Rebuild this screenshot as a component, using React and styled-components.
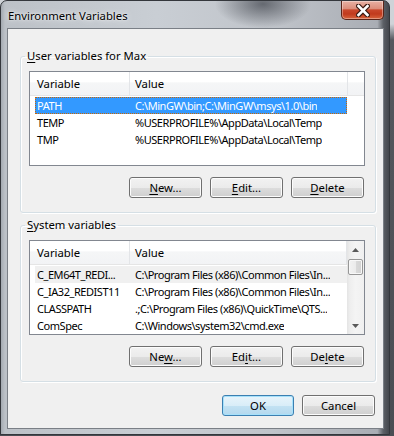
import React from "react";
import styled, { createGlobalStyle, css } from "styled-components";

const FONT = `"Segoe UI", "Noto Sans", sans-serif`;

const GlobalStyle = createGlobalStyle`
  html, body { margin: 0; padding: 0; }
  body {
    width: 394px;
    height: 436px;
    overflow: hidden;
    background: linear-gradient(180deg, #cfd3d8 0, #cfd3d8 24px, #55585e 40px, #4a4d53 100%);
    font-family: ${FONT};
    font-size: 11.3px;
    color: #000;
  }
`;

const Window = styled.div`
  box-sizing: border-box;
  width: 390px;
  height: 435px;
  display: flex;
  flex-direction: column;
  border: 1px solid #34373c;
  border-radius: 7px 7px 0 0;
  overflow: hidden;
  background:
    radial-gradient(ellipse 48px 24px at 262px 3px, rgba(70, 74, 82, 0.75), rgba(70, 74, 82, 0)),
    linear-gradient(90deg, #a4aab1 0, #bcc1c7 4px, #c9ced4 40%, #c0c4ca 70%, #a9adb4 97%, #5c6066 98.5%, #44474d 100%);
`;

const TitleBar = styled.div`
  height: 27px;
  display: flex;
  align-items: flex-start;
  flex-shrink: 0;
`;

const Title = styled.div`
  padding-left: 7px;
  line-height: 29px;
  color: #000;
  text-shadow: 0 0 6px rgba(255, 255, 255, 0.95), 0 0 2px rgba(255, 255, 255, 0.8);
`;

const CloseButton = styled.div`
  box-sizing: border-box;
  margin-left: auto;
  margin-right: 5px;
  width: 43px;
  height: 19px;
  border: 1px solid #5b2418;
  border-top: 0;
  border-radius: 0 0 5px 5px;
  background: linear-gradient(180deg, #e8b1a4 0%, #dc8e7b 42%, #c9472b 50%, #c13a1d 72%, #d8643d 100%);
  box-shadow: inset 0 0 0 1px rgba(255, 255, 255, 0.35);
  display: flex;
  align-items: center;
  justify-content: center;
`;

const Client = styled.div`
  flex: 1;
  margin: 0 5px 5px 6px;
  border: 1px solid #7a7f86;
  background: #f0f0f0;
  padding: 20px 7px 12px 12px;
  display: flex;
  flex-direction: column;
`;

const Group = styled.fieldset`
  margin: ${(p) => (p.$second ? "5px 0 0 0" : "0")};
  padding: 0;
  min-width: 0;
  border: 1px solid #d5dfe5;
  border-radius: 3px;
  box-shadow: inset 1px 1px 0 #ffffff, 1px 1px 0 #ffffff;
`;

const Legend = styled.legend`
  margin-left: 4px;
  padding: 0 2px;
  line-height: 14px;
`;

const GroupBody = styled.div`
  padding: 8px 10px 14px 8px;
  display: flex;
  flex-direction: column;
`;

const ListBox = styled.div`
  box-sizing: border-box;
  height: 95px;
  border: 1px solid #828790;
  background: #fff;
  display: flex;
  overflow: hidden;
  font-size: 11px;
`;

const ListMain = styled.div`
  flex: 1;
  display: flex;
  flex-direction: column;
  min-width: 0;
`;

const Header = styled.div`
  height: 23px;
  display: flex;
  border-bottom: 1px solid #e5e5e5;
  background: linear-gradient(180deg, #ffffff 0%, #ffffff 45%, #f5f6f7 46%, #f2f3f5 100%);
  flex-shrink: 0;
`;

const HeaderCell = styled.div`
  box-sizing: border-box;
  width: ${(p) => (p.$w ? `${p.$w}px` : "auto")};
  flex: ${(p) => (p.$w ? "none" : "1")};
  padding-left: ${(p) => p.$pl || 0}px;
  border-right: ${(p) => (p.$w ? "1px solid #e3e5e8" : "0")};
  display: flex;
  align-items: center;
  color: #000;
  font-size: 11.3px;
`;

const Rows = styled.div`
  padding-top: 1px;
  display: flex;
  flex-direction: column;
`;

const Row = styled.div`
  box-sizing: border-box;
  margin-left: 5px;
  width: 312px;
  height: 17px;
  display: flex;
  align-items: center;
  white-space: nowrap;
  letter-spacing: -0.45px;
  ${(p) =>
    p.$selected &&
    css`
      background: #3399ff;
      color: #fff;
      outline: 1px dotted #cc6600;
      outline-offset: -1px;
    `}
  ${(p) =>
    p.$inactive &&
    css`
      background: #f0f0f0;
    `}
`;

const NameCell = styled.div`
  box-sizing: border-box;
  width: 94px;
  padding-left: 2px;
  overflow: hidden;
`;

const ValueCell = styled.div`
  padding-left: 6px;
  overflow: hidden;
`;

const ScrollBar = styled.div`
  width: 17px;
  flex-shrink: 0;
  display: flex;
  flex-direction: column;
  background: linear-gradient(90deg, #e4e4e4 0, #eeeeee 3px, #f4f4f4 50%, #f0f0f0 100%);
`;

const ArrowBtn = styled.div`
  height: 17px;
  display: flex;
  align-items: center;
  justify-content: center;
  flex-shrink: 0;
`;

const Thumb = styled.div`
  box-sizing: border-box;
  margin: 1px 1px 0 1px;
  height: 16px;
  border: 1px solid #979797;
  border-radius: 2px;
  background: linear-gradient(90deg, #f2f2f2 0%, #ebebeb 50%, #d9d9d9 51%, #d2d2d2 100%);
  box-shadow: inset 0 0 0 1px #f8f8f8;
`;

const Track = styled.div`
  flex: 1;
`;

const ButtonRow = styled.div`
  display: flex;
  justify-content: flex-end;
  gap: 8px;
  margin: ${(p) => p.$m || "11px 1px 0 0"};
`;

const Button = styled.button`
  box-sizing: border-box;
  width: ${(p) => p.$w || 73}px;
  height: 21px;
  padding: 0;
  margin: 0;
  font-family: ${FONT};
  font-size: 11.3px;
  color: #000;
  border: 1px solid #707070;
  border-radius: 3px;
  background: linear-gradient(180deg, #f2f2f2 0%, #ebebeb 50%, #dddddd 51%, #cfcfcf 100%);
  box-shadow: inset 0 0 0 1px #fcfcfc;
  ${(p) =>
    p.$default &&
    css`
      border-color: #3c7fb1;
      background: linear-gradient(180deg, #e8f4fb 0%, #d9edf8 50%, #c3e2f3 51%, #b3d8ee 100%);
      box-shadow: inset 0 0 0 1px #a6e1fb;
    `}
`;

const Mn = styled.span`
  text-decoration: underline;
  text-underline-offset: 2px;
`;

const Arrow = ({ up }) => (
  <svg width="7" height="4" viewBox="0 0 7 4">
    <path d={up ? "M3.5 0 L7 4 L0 4 Z" : "M0 0 L7 0 L3.5 4 Z"} fill="#5a5a5a" />
  </svg>
);

const CloseGlyph = () => (
  <svg width="14" height="13" viewBox="0 0 14 13">
    <path d="M2.5 2 L11.5 11 M11.5 2 L2.5 11" stroke="#3a1a12" strokeWidth="5" strokeLinecap="square" />
    <path d="M2.5 2 L11.5 11 M11.5 2 L2.5 11" stroke="#ffffff" strokeWidth="2.6" strokeLinecap="square" />
  </svg>
);

const userVars = [
  ["PATH", "C:\\MinGW\\bin;C:\\MinGW\\msys\\1.0\\bin"],
  ["TEMP", "%USERPROFILE%\\AppData\\Local\\Temp"],
  ["TMP", "%USERPROFILE%\\AppData\\Local\\Temp"],
];

const sysVars = [
  ["C_EM64T_REDI...", "C:\\Program Files (x86)\\Common Files\\In..."],
  ["C_IA32_REDIST11", "C:\\Program Files (x86)\\Common Files\\In..."],
  ["CLASSPATH", ".;C:\\Program Files (x86)\\QuickTime\\QTS..."],
  ["ComSpec", "C:\\Windows\\system32\\cmd.exe"],
];

function ButtonSet({ letters }) {
  const [a, b, c] = letters;
  return (
    <ButtonRow>
      <Button>{a}</Button>
      <Button>{b}</Button>
      <Button>{c}</Button>
    </ButtonRow>
  );
}

export default function App() {
  return (
    <>
      <GlobalStyle />
      <Window>
        <TitleBar>
          <Title>Environment Variables</Title>
          <CloseButton>
            <CloseGlyph />
          </CloseButton>
        </TitleBar>
        <Client>
          <Group>
            <Legend>
              <Mn>U</Mn>ser variables for Max
            </Legend>
            <GroupBody>
              <ListBox>
                <ListMain>
                  <Header>
                    <HeaderCell $w={100} $pl={7}>Variable</HeaderCell>
                    <HeaderCell $w={218} $pl={5}>Value</HeaderCell>
                    <HeaderCell />
                  </Header>
                  <Rows>
                    {userVars.map(([n, v], i) => (
                      <Row key={n} $selected={i === 0}>
                        <NameCell>{n}</NameCell>
                        <ValueCell>{v}</ValueCell>
                      </Row>
                    ))}
                  </Rows>
                </ListMain>
              </ListBox>
              <ButtonSet
                letters={[
                  <><Mn>N</Mn>ew...</>,
                  <><Mn>E</Mn>dit...</>,
                  <><Mn>D</Mn>elete</>,
                ]}
              />
            </GroupBody>
          </Group>
          <Group $second>
            <Legend>
              <Mn>S</Mn>ystem variables
            </Legend>
            <GroupBody>
              <ListBox>
                <ListMain>
                  <Header>
                    <HeaderCell $w={100} $pl={7}>Variable</HeaderCell>
                    <HeaderCell $w={217} $pl={5}>Value</HeaderCell>
                  </Header>
                  <Rows>
                    {sysVars.map(([n, v], i) => (
                      <Row key={n} $inactive={i === 0}>
                        <NameCell>{n}</NameCell>
                        <ValueCell>{v}</ValueCell>
                      </Row>
                    ))}
                  </Rows>
                </ListMain>
                <ScrollBar>
                  <ArrowBtn><Arrow up /></ArrowBtn>
                  <Thumb />
                  <Track />
                  <ArrowBtn><Arrow /></ArrowBtn>
                </ScrollBar>
              </ListBox>
              <ButtonSet
                letters={[
                  <>Ne<Mn>w</Mn>...</>,
                  <>Ed<Mn>i</Mn>t...</>,
                  <>De<Mn>l</Mn>ete</>,
                ]}
              />
            </GroupBody>
          </Group>
          <ButtonRow $m="13px 1px 0 0">
            <Button $default $w={72}>OK</Button>
            <Button>Cancel</Button>
          </ButtonRow>
        </Client>
      </Window>
    </>
  );
}
